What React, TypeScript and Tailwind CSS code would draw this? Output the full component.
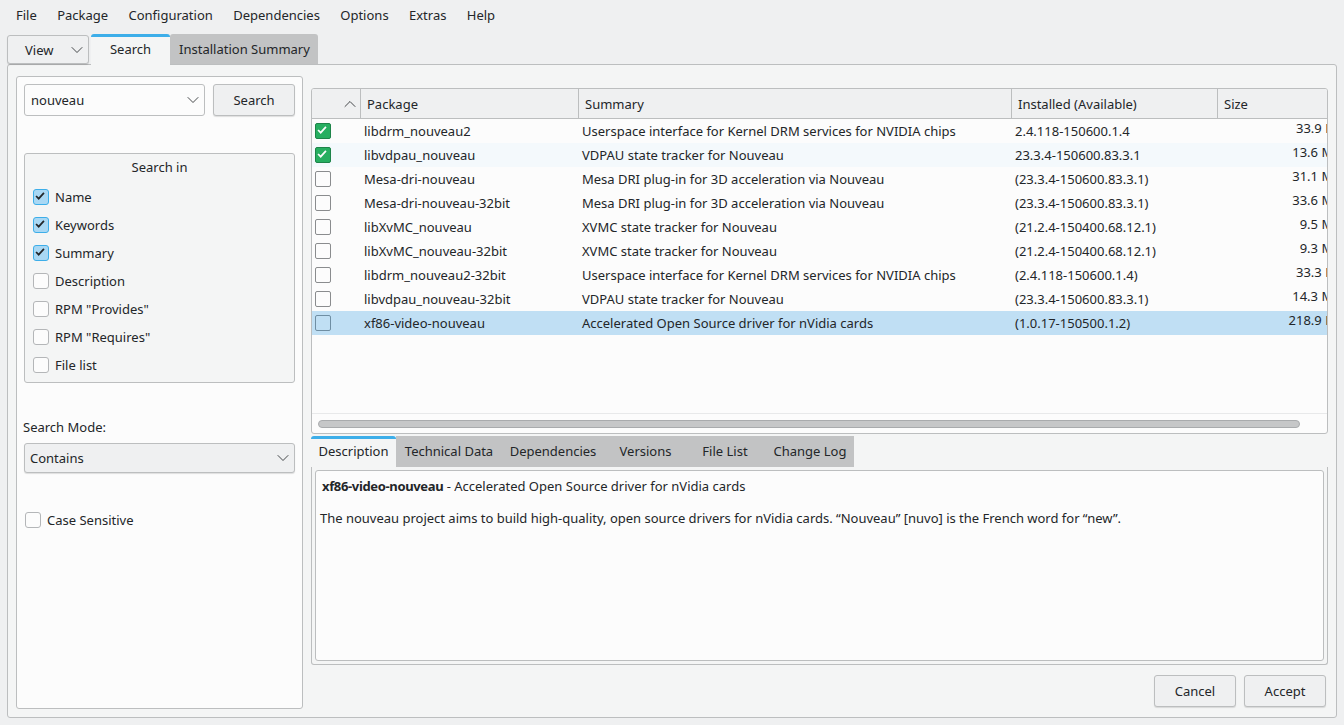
import { ChevronDown, ChevronUp } from 'lucide-react'

const menus = ['File', 'Package', 'Configuration', 'Dependencies', 'Options', 'Extras', 'Help']

const packages = [
  { name: 'libdrm_nouveau2', summary: 'Userspace interface for Kernel DRM services for NVIDIA chips', version: '2.4.118-150600.1.4', size: '33.9 KiB', installed: true },
  { name: 'libvdpau_nouveau', summary: 'VDPAU state tracker for Nouveau', version: '23.3.4-150600.83.3.1', size: '13.6 MiB', installed: true },
  { name: 'Mesa-dri-nouveau', summary: 'Mesa DRI plug-in for 3D acceleration via Nouveau', version: '(23.3.4-150600.83.3.1)', size: '31.1 MiB' },
  { name: 'Mesa-dri-nouveau-32bit', summary: 'Mesa DRI plug-in for 3D acceleration via Nouveau', version: '(23.3.4-150600.83.3.1)', size: '33.6 MiB' },
  { name: 'libXvMC_nouveau', summary: 'XVMC state tracker for Nouveau', version: '(21.2.4-150400.68.12.1)', size: '9.5 MiB' },
  { name: 'libXvMC_nouveau-32bit', summary: 'XVMC state tracker for Nouveau', version: '(21.2.4-150400.68.12.1)', size: '9.3 MiB' },
  { name: 'libdrm_nouveau2-32bit', summary: 'Userspace interface for Kernel DRM services for NVIDIA chips', version: '(2.4.118-150600.1.4)', size: '33.3 KiB' },
  { name: 'libvdpau_nouveau-32bit', summary: 'VDPAU state tracker for Nouveau', version: '(23.3.4-150600.83.3.1)', size: '14.3 MiB' },
  { name: 'xf86-video-nouveau', summary: 'Accelerated Open Source driver for nVidia cards', version: '(1.0.17-150500.1.2)', size: '218.9 KiB', selected: true },
]

const searchIn = [
  { label: 'Name', checked: true },
  { label: 'Keywords', checked: true },
  { label: 'Summary', checked: true },
  { label: 'Description' },
  { label: 'RPM "Provides"' },
  { label: 'RPM "Requires"' },
  { label: 'File list' },
]

const detailTabs = [
  { label: 'Technical Data', w: 'w-[106px]' },
  { label: 'Dependencies', w: 'w-[102px]' },
  { label: 'Versions', w: 'w-[83px]' },
  { label: 'File List', w: 'w-[76px]' },
  { label: 'Change Log', w: 'w-[91px] pl-[3px]' },
]

function Check({ color }: { color: string }) {
  return (
    <svg viewBox="0 0 16 16" className="h-full w-full -translate-x-px -translate-y-px" fill="none">
      <path d="M3.5 8 6.5 11 12.5 4.5" stroke={color} strokeWidth="2" />
    </svg>
  )
}

function CheckBox({ checked }: { checked?: boolean }) {
  return (
    <div
      className={
        checked
          ? 'h-4 w-4 shrink-0 rounded-[3px] border border-[#3daee9] bg-[#a9d8f4]'
          : 'h-4 w-4 shrink-0 rounded-[3px] border border-[#b4b6b8] bg-[#fcfcfc]'
      }
    >
      {checked && <Check color="#232629" />}
    </div>
  )
}

function PushButton({ label }: { label: string }) {
  return (
    <button className="h-8 w-[82px] rounded-[3px] border border-[#bcbebf] bg-[#eff0f1] shadow-[0_1px_1px_rgba(0,0,0,0.12)]">
      {label}
    </button>
  )
}

export default function App() {
  return (
    <div className="flex h-[725px] w-[1344px] flex-col overflow-hidden bg-[#eff0f1] font-['Noto_Sans',sans-serif] text-[13px] leading-[18px] text-[#232629]">
      <nav className="flex h-[31px] items-center pl-[5.8px]">
        {menus.map((m) => (
          <span key={m} className="px-[10.2px] leading-none">
            {m}
          </span>
        ))}
      </nav>

      <div className="relative z-10 -mb-px ml-[7px] mt-[3px] flex h-[31px] items-start">
        <div className="mt-px flex h-[29px] w-[82px] items-center justify-between rounded-[3px] border border-[#bcbebf] bg-[#eff0f1] pl-[17px] pr-px shadow-[0_1px_1px_rgba(0,0,0,0.12)]">
          <span>View</span>
          <ChevronDown size={20} strokeWidth={1} />
        </div>
        <div className="ml-[2px] flex h-[31px] w-[79px] items-center justify-center rounded-t-[3px] border-t-[3px] border-[#3daee9] bg-[#f4f5f5] pb-[5px]">
          Search
        </div>
        <div className="flex h-[30px] w-[148px] items-center justify-center rounded-t-[3px] bg-[#c2c3c4] pl-px">
          Installation Summary
        </div>
      </div>

      <main className="ml-[7px] flex h-[654px] w-[1330px] gap-2 rounded-[3px] border border-[#bcbebf] bg-[#f4f5f5] pl-2 pt-[11px]">
        <aside className="flex h-[633px] w-[287px] shrink-0 flex-col rounded-[3px] border border-[#bcbebf] bg-[#fcfcfc] pl-[7px] pt-[7px]">
          <div className="flex gap-2">
            <div className="flex h-8 w-[181px] items-center justify-between rounded-[3px] border border-[#bcbebf] bg-[#fcfcfc] pl-[6px] pr-px">
              <span>nouveau</span>
              <ChevronDown size={20} strokeWidth={1} />
            </div>
            <PushButton label="Search" />
          </div>

          <section className="mt-[37px] flex h-[230px] w-[271px] flex-col rounded-[3px] border border-[#bcbebf] bg-[#f4f5f5] pl-2">
            <div className="flex h-[25px] items-center justify-center pr-2">Search in</div>
            <div className="mt-[10px] flex flex-col gap-3">
              {searchIn.map((o) => (
                <label key={o.label} className="flex h-4 items-center gap-[6px]">
                  <CheckBox checked={o.checked} />
                  {o.label}
                </label>
              ))}
            </div>
          </section>

          <div className="-ml-px mt-[35px]">Search Mode:</div>
          <div className="mt-[7px] flex h-[30px] w-[271px] items-center justify-between rounded-[3px] border border-[#bcbebf] bg-[#eff0f1] pl-[5px] pr-px shadow-[0_1px_1px_rgba(0,0,0,0.12)]">
            <span>Contains</span>
            <ChevronDown size={20} strokeWidth={1} />
          </div>

          <label className="ml-px mt-[39px] flex h-4 items-center gap-[6px]">
            <CheckBox />
            Case Sensitive
          </label>
        </aside>

        <div className="flex w-[1017px] flex-col">
          <div className="mt-[12px] h-[346px] overflow-hidden rounded-[3px] border border-[#bcbebf] bg-[#fcfcfc]">
            <div className="flex h-[30px] border-b border-[#bcbebf] bg-[#eff0f1]">
              <div className="flex w-[49px] items-center justify-end border-r border-[#bcbebf]">
                <ChevronUp size={20} strokeWidth={1} />
              </div>
              <div className="flex w-[218px] items-center border-r border-[#bcbebf] pl-[6px]">Package</div>
              <div className="flex w-[433px] items-center border-r border-[#bcbebf] pl-[6px]">Summary</div>
              <div className="flex w-[206px] items-center border-r border-[#bcbebf] pl-[6px]">Installed (Available)</div>
              <div className="flex flex-1 items-center pl-[6px]">Size</div>
            </div>

            <div className="h-[294px]">
              {packages.map((p, i) => (
                <div
                  key={p.name}
                  className={
                    p.selected
                      ? 'flex h-6 items-center bg-[#c0dff4]'
                      : i === 1
                        ? 'flex h-6 items-center bg-[#f4f9fc]'
                        : 'flex h-6 items-center'
                  }
                >
                  <div className="flex w-[49px] shrink-0 pl-[3px]">
                    {p.installed ? (
                      <div className="h-4 w-4 rounded-[2px] border border-[#1e8449] bg-[#27ae60]">
                        <Check color="#fcfcfc" />
                      </div>
                    ) : (
                      <div
                        className={
                          p.selected
                            ? 'h-4 w-4 rounded-[2px] border border-[#6f8ea3] bg-[#c0dff4]'
                            : 'h-4 w-4 rounded-[2px] border border-[#8a8c8e] bg-[#fcfcfc]'
                        }
                      />
                    )}
                  </div>
                  <div className="w-[218px] shrink-0 pl-[3px]">{p.name}</div>
                  <div className="w-[433px] shrink-0 pl-[3px]">{p.summary}</div>
                  <div className="w-[206px] shrink-0 pl-[3px]">{p.version}</div>
                  <div className="-mt-[6px] flex-1 overflow-hidden">
                    <div className="w-[127px] whitespace-nowrap text-right">{p.size}</div>
                  </div>
                </div>
              ))}
            </div>

            <div className="flex h-5 items-center border-t border-[#e8e9ea] pl-[6px]">
              <div className="h-2 w-[982px] rounded-full border border-[#a9abad] bg-[#c6c7c8]" />
            </div>
          </div>

          <div className="mt-[2px] flex h-[31px] items-stretch">
            <div className="flex w-[85px] items-center justify-center rounded-t-[3px] border-t-[3px] border-[#3daee9] bg-[#f4f5f5] pb-[4px]">
              Description
            </div>
            {detailTabs.map((t) => (
              <div key={t.label} className={`flex items-center justify-center bg-[#c2c3c4] pb-[2px] ${t.w}`}>
                {t.label}
              </div>
            ))}
          </div>

          <div className="h-[198px] rounded-b-[3px] border border-t-0 border-[#bcbebf] px-[3px] pt-[3px]">
            <div className="h-[191px] rounded-[3px] border border-[#bcbebf] bg-[#fcfcfc] pl-[6px] pt-[6px]">
              <p>
                <b className="font-bold tracking-[-0.35px]">xf86-video-nouveau</b> - Accelerated Open Source driver for nVidia cards
              </p>
              <p className="-ml-[2px] mt-[14px] tracking-[-0.008px]">
                The nouveau project aims to build high-quality, open source drivers for nVidia cards. “Nouveau” [nuvo] is the French word for “new”.
              </p>
            </div>
          </div>

          <div className="mt-[10px] flex justify-end gap-2 pr-[2px]">
            <PushButton label="Cancel" />
            <PushButton label="Accept" />
          </div>
        </div>
      </main>
    </div>
  )
}
